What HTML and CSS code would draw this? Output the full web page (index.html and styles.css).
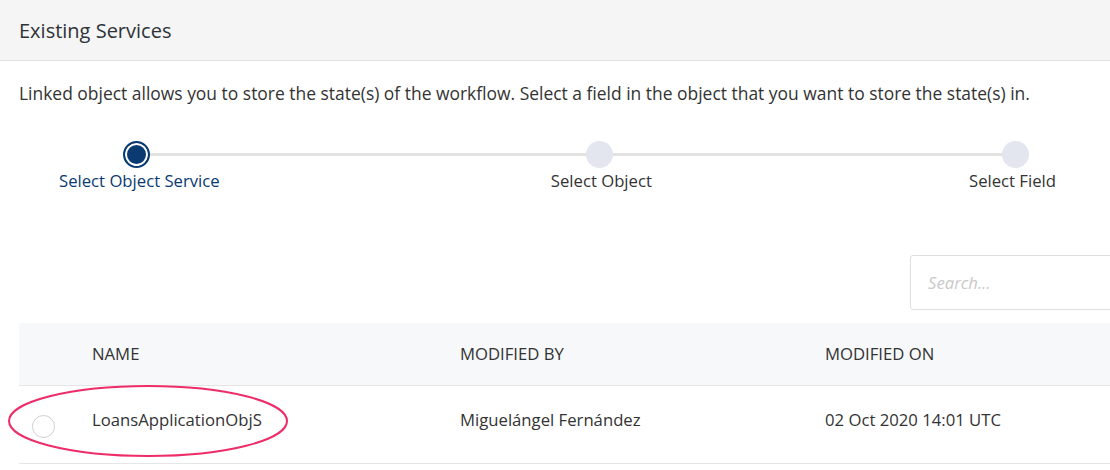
FILE: index.html
```html
<!DOCTYPE html>
<html lang="en">
<head>
<meta charset="utf-8">
<title>Existing Services</title>
<link rel="stylesheet" href="styles.css">
</head>
<body>
<header class="panel-header">
  <h1 class="panel-title">Existing Services</h1>
</header>
<main class="panel-body">
  <p class="intro">Linked object allows you to store the state(s) of the workflow. Select a field in the object that you want to store the state(s) in.</p>

  <ol class="stepper">
    <li class="step step-first is-active"><span class="dot"></span><span class="label">Select Object Service</span></li>
    <li class="step step-mid"><span class="dot"></span><span class="label">Select Object</span></li>
    <li class="step step-last"><span class="dot"></span><span class="label">Select Field</span></li>
  </ol>

  <div class="toolbar">
    <input class="search" type="text" placeholder="Search...">
  </div>

  <div class="table">
    <div class="row head">
      <div class="cell c-sel"></div>
      <div class="cell c-name">NAME</div>
      <div class="cell c-by">MODIFIED BY</div>
      <div class="cell c-on">MODIFIED ON</div>
    </div>
    <div class="row body-row">
      <div class="cell c-sel"><span class="radio"></span></div>
      <div class="cell c-name">LoansApplicationObjS</div>
      <div class="cell c-by">Miguelángel Fernández</div>
      <div class="cell c-on">02 Oct 2020 14:01 UTC</div>
      <svg class="highlight" width="284" height="76" viewBox="0 0 284 76" aria-hidden="true">
        <ellipse cx="141" cy="37" rx="139" ry="35" fill="none" stroke="#ee2c68" stroke-width="2"/>
      </svg>
    </div>
  </div>
</main>
</body>
</html>
```

FILE: styles.css
```css
* { box-sizing: border-box; }

body {
  margin: 0;
  font-family: "Open Sans", "Noto Sans", sans-serif;
  color: #333;
  background: #fff;
  overflow: hidden;
}

.panel-header {
  height: 61px;
  background: #f5f5f5;
  border-bottom: 1px solid #e2e2e2;
  display: flex;
  align-items: center;
  padding-left: 19px;
}

.panel-title {
  margin: 0;
  font-size: 20px;
  font-weight: 400;
  color: #2e3338;
  line-height: 26px;
  padding-top: 1px;
}

.panel-body {
  padding: 0 0 0 19px;
}

.intro {
  margin: 21px 0 0;
  font-size: 17.45px;
  line-height: 22px;
  color: #333;
  white-space: nowrap;
}

.stepper {
  list-style: none;
  margin: 37px 0 0 40px;
  padding: 0;
  width: 997px;
  display: flex;
  justify-content: space-between;
  position: relative;
}

.stepper::before {
  content: "";
  position: absolute;
  left: 78px;
  right: 40px;
  top: 12px;
  height: 3px;
  background: #e2e2e2;
}

.step {
  display: flex;
  flex-direction: column;
  align-items: center;
  position: relative;
}

.dot {
  width: 27px;
  height: 27px;
  border-radius: 50%;
  background: #e3e6ef;
}

.step-first .dot { margin-right: 5px; }
.step-mid { margin-left: 14px; }
.step-mid .dot { margin-right: 4px; }
.step-last .dot { margin-left: 6px; }

.is-active .dot {
  background: #0a3a72;
  border: 2px solid #0a3a72;
  box-shadow: inset 0 0 0 2px #fff;
}

.label {
  margin-top: 2px;
  font-size: 16.7px;
  line-height: 22px;
  color: #333;
  white-space: nowrap;
}

.is-active .label { color: #0a3a72; }

.toolbar {
  display: flex;
  justify-content: flex-end;
  margin-top: 63px;
}

.search {
  width: 220px;
  height: 55px;
  margin-right: -20px;
  border: 1px solid #dedede;
  border-radius: 3px;
  padding: 0 0 0 17px;
  font-family: inherit;
  font-size: 16.7px;
  color: #333;
  background: #fff;
  outline: none;
}

.search::placeholder {
  color: #c9c9c9;
  font-style: italic;
}

.table {
  margin-top: 13px;
}

.row {
  display: flex;
  align-items: center;
  border-bottom: 1px solid #e6e6e6;
  position: relative;
}

.head {
  height: 63px;
  background: #f7f8fa;
}

.body-row { height: 78px; }

.cell {
  font-size: 16.7px;
  line-height: 22px;
  color: #333;
  white-space: nowrap;
}

.body-row .c-name,
.body-row .c-by,
.body-row .c-on { padding-bottom: 9px; }

.c-sel { width: 73px; display: flex; align-items: center; }
.c-name { width: 368px; }
.c-by { width: 365px; }
.c-on { flex: 1; }

.radio {
  width: 23px;
  height: 23px;
  margin-left: 13px;
  margin-top: 4px;
  border: 1px solid #cfcfcf;
  border-radius: 50%;
  background: #fff;
}

.highlight {
  position: absolute;
  left: -12px;
  top: -2px;
}
```
